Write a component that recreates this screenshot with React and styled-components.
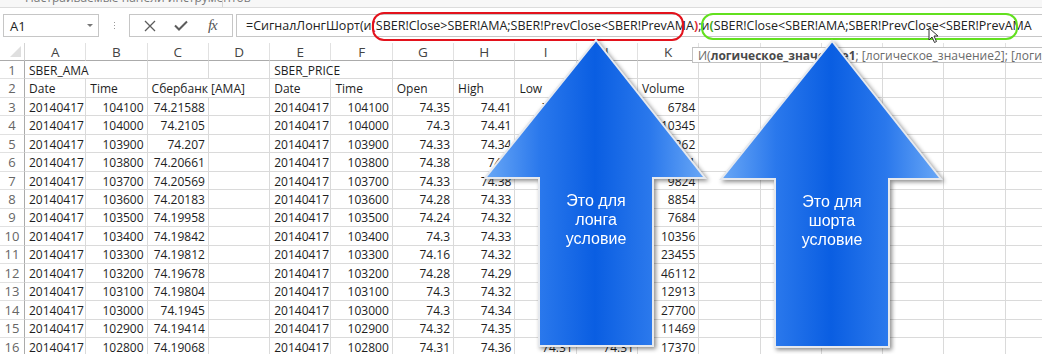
import React from 'react'
import styled, { createGlobalStyle } from 'styled-components'

const GlobalStyle = createGlobalStyle`
  body {
    margin: 0;
    background: #fff;
    font-family: 'Open Sans', 'Noto Sans', sans-serif;
    overflow: hidden;
  }
`

const Page = styled.div`
  position: relative;
  width: 1042px;
  height: 354px;
  overflow: hidden;
  background: #fff;
`

const TopStrip = styled.div`
  position: relative;
  height: 7px;
  border-bottom: 1px solid #dcdcdc;
  background: #f7f7f7;
  overflow: hidden;
`

const StripLabel = styled.div`
  position: absolute;
  left: 25px;
  top: -9px;
  font-size: 12px;
  line-height: 14px;
  color: #7a7a7a;
  white-space: nowrap;
`

const StripDivider = styled.div`
  position: absolute;
  left: 222px;
  top: 0;
  width: 1px;
  height: 7px;
  background: #d6d6d6;
`

const FormulaBar = styled.div`
  display: flex;
  height: 23px;
  margin-top: 6px;
  padding-left: 3px;
`

const NameBox = styled.div`
  width: 96px;
  border: 1px solid #c6c6c6;
  display: flex;
  align-items: center;
  justify-content: space-between;
  padding: 0 5px 0 6px;
  box-sizing: border-box;
  font-size: 13px;
  color: #222;
`

const Caret = styled.span`
  width: 0;
  height: 0;
  border-left: 3px solid transparent;
  border-right: 3px solid transparent;
  border-top: 3px solid #777;
`

const Dots = styled.div`
  width: 30px;
  display: flex;
  flex-direction: column;
  align-items: center;
  justify-content: center;
  gap: 2px;
  & > span {
    width: 1px;
    height: 1px;
    background: #999;
  }
`

const ButtonGroup = styled.div`
  width: 104px;
  border: 1px solid #c6c6c6;
  box-sizing: border-box;
  display: flex;
  align-items: center;
  justify-content: space-around;
  padding: 0 4px;
`

const IconButton = styled.span`
  width: 26px;
  display: flex;
  justify-content: center;
  align-items: center;
  color: #5a5a5a;
`

const Fx = styled.span`
  font-family: 'Liberation Serif', 'DejaVu Serif', serif;
  font-style: italic;
  font-size: 15px;
  color: #555;
  letter-spacing: -1px;
`

const FormulaInput = styled.div`
  flex: 1;
  margin-left: 3px;
  border: 1px solid #c6c6c6;
  border-right: none;
  padding-left: 9px;
  display: flex;
  align-items: center;
  font-size: 12.5px;
  color: #222;
  white-space: nowrap;
  overflow: hidden;
`

const Paren = styled.span`
  color: ${p => p.$color};
  font-weight: bold;
`

const Sheet = styled.div`
  margin-top: 6px;
  display: grid;
  grid-template-columns: 25px repeat(17, 61.3px);
  grid-template-rows: 18px;
  grid-auto-rows: 18.47px;
`

const Corner = styled.div`
  position: relative;
  border-right: 1px solid #d4d4d4;
  border-bottom: 1px solid #ababab;
  &::after {
    content: '';
    position: absolute;
    right: 3px;
    bottom: 3px;
    width: 0;
    height: 0;
    border-left: 11px solid transparent;
    border-bottom: 11px solid #dfdfdf;
  }
`

const ColHead = styled.div`
  border-right: 1px solid #e1e1e1;
  border-bottom: 1px solid #ababab;
  display: flex;
  align-items: center;
  justify-content: center;
  font-size: 13.5px;
  color: #444;
`

const RowHead = styled.div`
  border-right: 1px solid #ababab;
  border-bottom: 1px solid #e1e1e1;
  display: flex;
  align-items: center;
  justify-content: center;
  font-size: 13px;
  color: #666;
`

const Cell = styled.div`
  grid-column: span ${p => p.$span || 1};
  border-right: 1px solid #dadada;
  border-bottom: 1px solid #dadada;
  display: flex;
  align-items: center;
  justify-content: ${p => (p.$num ? 'flex-end' : 'flex-start')};
  padding: 1px 3px 0 4px;
  font-size: 12px;
  color: #1e1e1e;
  white-space: nowrap;
  overflow: hidden;
`

const Highlight = styled.div`
  position: absolute;
  left: ${p => p.$x}px;
  top: ${p => p.$y}px;
  width: ${p => p.$w}px;
  height: ${p => p.$h}px;
  border: 2px solid ${p => p.$color};
  border-radius: 12px;
  box-sizing: border-box;
`

const Tooltip = styled.div`
  position: absolute;
  left: 692px;
  top: 47px;
  height: 16px;
  padding: 0 5px;
  border: 1px solid #c2c2c2;
  background: #fff;
  box-sizing: border-box;
  display: flex;
  align-items: center;
  font-size: 12px;
  color: #6a6a6a;
  white-space: nowrap;
  & b {
    color: #4a4a4a;
  }
`

const ArrowWrap = styled.div`
  position: absolute;
  left: ${p => p.$x}px;
  top: ${p => p.$y}px;
  width: 226px;
  height: 312px;
  filter: drop-shadow(2px 2px 2px rgba(0, 0, 0, 0.45));
`

const ArrowLabel = styled.div`
  position: absolute;
  left: 56px;
  width: 114px;
  top: 153px;
  text-align: center;
  font-family: 'Liberation Sans', Arial, sans-serif;
  font-size: 16px;
  line-height: 19px;
  color: #fff;
`

const Cursor = styled.svg`
  position: absolute;
  left: 928px;
  top: 27px;
`

const cols = ['A', 'B', 'C', 'D', 'E', 'F', 'G', 'H', 'I', 'J', 'K', 'L', 'M', 'N', 'O', 'P', 'Q']

const times = [104100, 104000, 103900, 103800, 103700, 103600, 103500, 103400, 103300, 103200, 103100, 103000, 102900, 102800]
const ama = ['74.21588', '74.2105', '74.207', '74.20661', '74.20569', '74.20183', '74.19958', '74.19842', '74.19812', '74.19678', '74.19804', '74.1945', '74.19414', '74.19068']
const open = ['74.35', '74.3', '74.33', '74.38', '74.33', '74.28', '74.24', '74.3', '74.16', '74.28', '74.3', '74.3', '74.32', '74.31']
const high = ['74.41', '74.41', '74.34', '74.4', '74.38', '74.33', '74.32', '74.33', '74.32', '74.29', '74.32', '74.34', '74.35', '74.36']
const low = ['74.33', '74.3', '74.3', '74.33', '74.32', '74.28', '74.22', '74.28', '74.16', '74.26', '74.28', '74.3', '74.31', '74.31']
const close = ['74.35', '74.35', '74.31', '74.33', '74.38', '74.32', '74.29', '74.25', '74.3', '74.16', '74.28', '74.3', '74.3', '74.31']
const volume = [6784, 10345, 7262, 8411, 9824, 8854, 7684, 10356, 23455, 46112, 12913, 27700, 11469, 17370]

const Empty = ({ n }) => Array.from({ length: n }, (_, i) => <Cell key={'e' + i} />)

const BlueArrow = ({ x, y, id, lines }) => (
  <ArrowWrap $x={x} $y={y}>
    <svg width="226" height="312" viewBox="0 0 226 312">
      <defs>
        <linearGradient id={id} x1="2" y1="0" x2="222" y2="0" gradientUnits="userSpaceOnUse">
          <stop offset="0" stopColor="#6aa8f6" />
          <stop offset="0.25" stopColor="#2a78ec" />
          <stop offset="0.5" stopColor="#0a5ee2" />
          <stop offset="0.75" stopColor="#2a78ec" />
          <stop offset="1" stopColor="#6aa8f6" />
        </linearGradient>
      </defs>
      <path
        d="M113 2 L222 140 L170 140 L170 308 L56 308 L56 140 L2 140 Z"
        fill={`url(#${id})`}
        stroke="#e6e9ee"
        strokeWidth="2"
        strokeLinejoin="miter"
      />
    </svg>
    <ArrowLabel>
      {lines.map(l => (
        <div key={l}>{l}</div>
      ))}
    </ArrowLabel>
  </ArrowWrap>
)

const App = () => (
  <Page>
    <GlobalStyle />
    <TopStrip>
      <StripLabel>Настраиваемые панели инструментов</StripLabel>
      <StripDivider />
    </TopStrip>

    <FormulaBar>
      <NameBox>
        A1
        <Caret />
      </NameBox>
      <Dots>
        <span />
        <span />
        <span />
      </Dots>
      <ButtonGroup>
        <IconButton>
          <svg width="12" height="12" viewBox="0 0 12 12">
            <path d="M1 1 L11 11 M11 1 L1 11" stroke="#5c5c5c" strokeWidth="1.3" fill="none" />
          </svg>
        </IconButton>
        <IconButton>
          <svg width="14" height="11" viewBox="0 0 14 11">
            <path d="M1 5.5 L5 9.5 L13 1.5" stroke="#5c5c5c" strokeWidth="2" fill="none" />
          </svg>
        </IconButton>
        <IconButton>
          <Fx>fx</Fx>
        </IconButton>
      </ButtonGroup>
      <FormulaInput>
        =СигналЛонгШорт(и<Paren $color="#e0303a">(</Paren>SBER!Close&gt;SBER!AMA;SBER!PrevClose&lt;SBER!PrevAMA
        <Paren $color="#e0303a">)</Paren>;и<Paren $color="#4caf1a">(</Paren>SBER!Close&lt;SBER!AMA;SBER!PrevClose&lt;SBER!PrevAMA
      </FormulaInput>
    </FormulaBar>

    <Sheet>
      <Corner />
      {cols.map(c => (
        <ColHead key={c}>{c}</ColHead>
      ))}

      <RowHead>1</RowHead>
      <Cell $span={2}>SBER_AMA</Cell>
      <Cell />
      <Cell />
      <Cell $span={2}>SBER_PRICE</Cell>
      <Empty n={11} />

      <RowHead>2</RowHead>
      <Cell>Date</Cell>
      <Cell>Time</Cell>
      <Cell $span={2}>Сбербанк [AMA]</Cell>
      <Cell>Date</Cell>
      <Cell>Time</Cell>
      <Cell>Open</Cell>
      <Cell>High</Cell>
      <Cell>Low</Cell>
      <Cell>Close</Cell>
      <Cell>Volume</Cell>
      <Empty n={6} />

      {times.map((t, i) => (
        <React.Fragment key={t}>
          <RowHead>{i + 3}</RowHead>
          <Cell>20140417</Cell>
          <Cell $num>{t}</Cell>
          <Cell $num>{ama[i]}</Cell>
          <Cell />
          <Cell>20140417</Cell>
          <Cell $num>{t}</Cell>
          <Cell $num>{open[i]}</Cell>
          <Cell $num>{high[i]}</Cell>
          <Cell $num>{low[i]}</Cell>
          <Cell $num>{close[i]}</Cell>
          <Cell $num>{volume[i]}</Cell>
          <Empty n={6} />
        </React.Fragment>
      ))}
    </Sheet>

    <Highlight $x={372} $y={12} $w={312} $h={29} $color="#e3121c" />
    <Highlight $x={701} $y={13} $w={317} $h={27} $color="#62e01e" />

    <Tooltip>
      И(<b>логическое_значение1</b>; [логическое_значение2]; [логическое_значение3]; ...)
    </Tooltip>

    <BlueArrow x={483} y={38} id="gradLong" lines={['Это для', 'лонга', 'условие']} />
    <BlueArrow x={719} y={39} id="gradShort" lines={['Это для', 'шорта', 'условие']} />

    <Cursor width="12" height="17" viewBox="0 0 12 17">
      <path d="M1 1 L1 13 L4 10 L6.5 15.5 L8.5 14.5 L6 9 L10 9 Z" fill="#fff" stroke="#333" strokeWidth="1" />
    </Cursor>
  </Page>
)

export default App
